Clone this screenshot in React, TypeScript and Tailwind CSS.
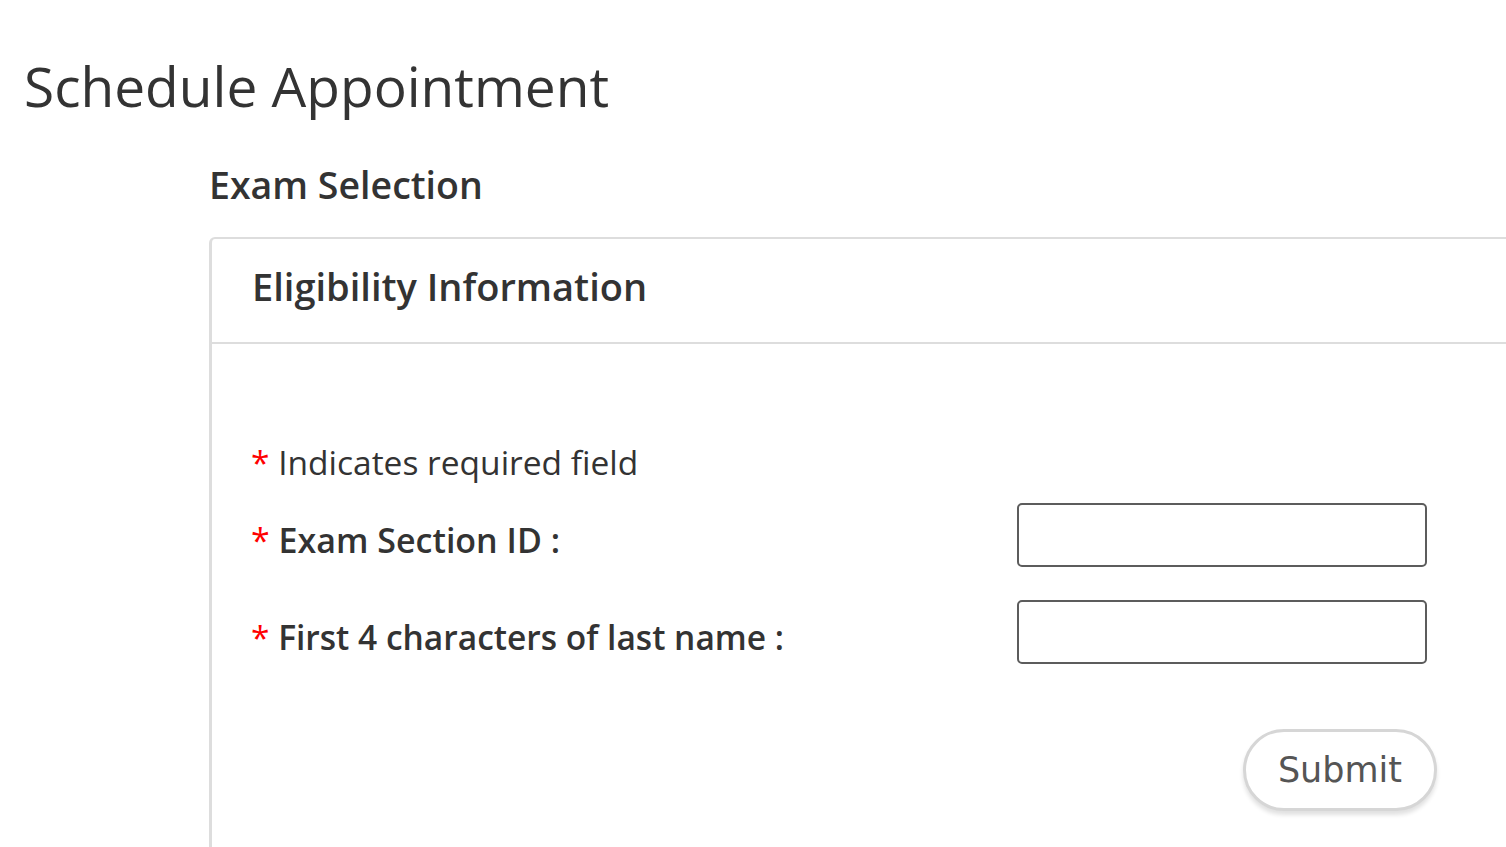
export default function App() {
  return (
    <div className="h-screen overflow-hidden bg-white text-[#333] font-['Open_Sans',sans-serif]">
      <h1 className="pl-[24px] pt-[50px] text-[55px] leading-[72px] font-normal">
        Schedule Appointment
      </h1>

      <div className="pl-[209px] pt-[36px]">
        <h2 className="text-[37.5px] leading-[54px] font-semibold">
          Exam Selection
        </h2>

        <div className="mt-[25px] border-l-[3px] border-t-2 border-[#dddddd] rounded-tl-[6px] min-h-[700px]">
          {/* Card header */}
          <div className="h-[105px] flex items-center pl-[40px] border-b-2 border-[#dddddd]">
            <h3 className="text-[38px] font-semibold leading-none pb-[10px]">
              Eligibility Information
            </h3>
          </div>

          {/* Card body */}
          <div className="pl-[39px] pr-[79px] pt-[96px]">
            <p className="text-[33.5px] leading-[44px]">
              <span className="text-[#ff0000]">*</span> Indicates required field
            </p>

            <div className="mt-[19px] flex items-center justify-between">
              <label className="text-[34px] font-semibold leading-[44px] pt-[10px]">
                <span className="text-[#ff0000] font-normal">*</span> Exam Section ID :
              </label>
              <input
                type="text"
                className="w-[410px] h-[64px] border-2 border-[#5c5c5c] rounded-[5px] bg-white"
              />
            </div>

            <div className="mt-[33px] flex items-center justify-between">
              <label className="text-[33.5px] font-semibold leading-[44px] pt-[10px]">
                <span className="text-[#ff0000] font-normal">*</span> First 4 characters of last name :
              </label>
              <input
                type="text"
                className="w-[410px] h-[64px] border-2 border-[#5c5c5c] rounded-[5px] bg-white"
              />
            </div>

            <div className="mt-[65px] flex justify-end -mr-[10px]">
              <button className="w-[194px] h-[82px] rounded-full border-[3px] border-[#d6d6d6] bg-white text-[#555] text-[35px] font-['DejaVu_Sans',sans-serif] shadow-[0_4px_4px_rgba(0,0,0,0.12)]">
                Submit
              </button>
            </div>
          </div>
        </div>
      </div>
    </div>
  );
}
